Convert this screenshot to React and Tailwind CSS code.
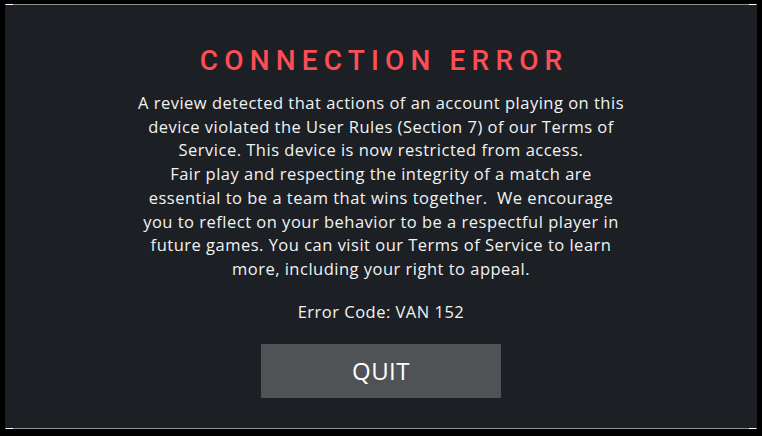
const lines = [
  "A review detected that actions of an account playing on this",
  "device violated the User Rules (Section 7) of our Terms of",
  "Service. This device is now restricted from access.",
  "Fair play and respecting the integrity of a match are",
  "essential to be a team that wins together.  We encourage",
  "you to reflect on your behavior to be a respectful player in",
  "future games. You can visit our Terms of Service to learn",
  "more, including your right to appeal.",
];

export default function App() {
  return (
    <div className="w-[762px] h-[436px] bg-black pt-[4px] pl-[5px]">
      <div
        className="relative w-[752px] h-[425px] bg-[#1c2024] border-y border-[#8e9092] flex flex-col items-center text-white"
        style={{ fontFamily: "'Open Sans', 'Liberation Sans', sans-serif" }}
      >
        {/* white corner accents */}
        <div className="absolute left-[1px] -top-px w-[7px] h-px bg-white" />
        <div className="absolute right-[1px] -top-px w-[7px] h-px bg-white" />
        <div className="absolute left-[1px] -bottom-px w-[7px] h-px bg-white" />
        <div className="absolute right-[1px] -bottom-px w-[7px] h-px bg-white" />

        <h1
          className="mt-[38px] text-[28px] leading-[36px] tracking-[0.22em] font-medium text-[#ff4d55] pl-[0.22em]"
          style={{ fontFamily: "Roboto, 'Liberation Sans', sans-serif" }}
        >
          CONNECTION ERROR
        </h1>
        <div className="mt-[12px] text-[16.5px] leading-[23.7px] tracking-[0.03em] text-center text-[#f2f2f2]">
          {lines.map((l, i) => (
            <p key={i} className="whitespace-pre">{l}</p>
          ))}
        </div>
        <p className="mt-[19px] text-[16.5px] leading-[24px] tracking-[0.03em] text-[#f2f2f2]">Error Code: VAN 152</p>
        <button className="mt-[20px] w-[240px] h-[54px] bg-[#4f5356] text-[24px] tracking-[0.02em] text-white">
          QUIT
        </button>
      </div>
    </div>
  );
}
